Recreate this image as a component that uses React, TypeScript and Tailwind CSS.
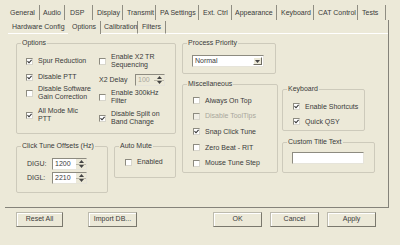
import React from 'react';

const topTabs = [
    { label: 'General', cls: 'w-[32px] pl-[2px]' },
    { label: 'Audio', cls: 'w-[25px] pl-[3px]' },
    { label: 'DSP', cls: 'w-[28px] pl-[5px]' },
    { label: 'Display', cls: 'w-[30px] pl-[4px]' },
    { label: 'Transmit', cls: 'w-[33px] pl-[4px]' },
    { label: 'PA Settings', cls: 'w-[43px] pl-[4px]' },
    { label: 'Ext. Ctrl', cls: 'w-[33px] pl-[4px]' },
    { label: 'Appearance', cls: 'w-[45px] pl-[3px]' },
    { label: 'Keyboard', cls: 'w-[37px] pl-[4px]' },
    { label: 'CAT Control', cls: 'w-[44px] pl-[4px]' },
    { label: 'Tests', cls: 'w-[28px] pl-[4px]' },
];

const Check = ({ checked = false, disabled = false }: { checked?: boolean; disabled?: boolean }) => (
    <span
        className={`w-[7px] h-[7px] shrink-0 border border-[#8d8b80] border-r-[#d8d6cc] border-b-[#d8d6cc] flex items-center justify-center ${
            disabled ? 'bg-[#f1efe6]' : 'bg-white'
        }`}
    >
        {checked && (
            <svg width="5" height="5" viewBox="0 0 5 5">
                <path d="M0.5 2.2 L2 3.8 L4.6 0.8" stroke="#333" strokeWidth="1.1" fill="none" />
            </svg>
        )}
    </span>
);

const CheckRow = ({
    lines,
    checked,
    disabled,
    className = '',
}: {
    lines: string[];
    checked?: boolean;
    disabled?: boolean;
    className?: string;
}) => (
    <div className={`flex items-center gap-[5px] ${className}`}>
        <Check checked={checked} disabled={disabled} />
        <span className={`leading-[8px] whitespace-nowrap ${disabled ? 'text-[#a9a79c]' : ''}`}>
            {lines.map((l) => (
                <span key={l} className="block">
                    {l}
                </span>
            ))}
        </span>
    </div>
);

const Group = ({ title, className, children }: { title: string; className: string; children?: React.ReactNode }) => (
    <fieldset className={`border border-[#cdcabb] rounded-[2px] ${className}`}>
        <legend className="ml-[4px] px-[1px] leading-[8px]">{title}</legend>
        {children}
    </fieldset>
);

const Tri = ({ up = false }: { up?: boolean }) => (
    <svg width="5" height="3" viewBox="0 0 5 3">
        <path d={up ? 'M0 3 L2.5 0 L5 3 Z' : 'M0 0 L5 0 L2.5 3 Z'} fill="#444" />
    </svg>
);

const Spin = ({ value, disabled = false, className }: { value: string; disabled?: boolean; className: string }) => (
    <div
        className={`flex h-[12px] border border-[#8d8b80] border-r-[#e6e4da] border-b-[#e6e4da] ${
            disabled ? 'bg-[#ece9d8] text-[#a9a79c]' : 'bg-white'
        } ${className}`}
    >
        <span className="flex-1 pl-[2px] leading-[10px]">{value}</span>
        <div className="w-[10px] flex flex-col bg-[#ece9d8]">
            <div className="flex-1 flex items-center justify-center border-b border-[#b9b6a7]">
                <Tri up />
            </div>
            <div className="flex-1 flex items-center justify-center">
                <Tri />
            </div>
        </div>
    </div>
);

const Btn = ({ label, className }: { label: string; className: string }) => (
    <div
        className={`h-[15px] flex items-center justify-center border border-[#bdbbae] border-r-[#7a786d] border-b-[#7a786d] shadow-[inset_1px_1px_0_#fff] ${className}`}
    >
        {label}
    </div>
);

export default function App() {
    return (
        <div className="w-[400px] h-[245px] overflow-hidden bg-[#ece9d8] text-[#3a3a3a] text-[7px] font-['Liberation_Sans',Arial,sans-serif]">
            {/* top tab strip */}
            <div className="flex pl-[8px] pt-[5px] h-[20px]">
                {topTabs.map((t) => (
                    <div key={t.label} className={`h-[15px] leading-[16px] border-r border-[#8f8d82] whitespace-nowrap ${t.cls}`}>
                        {t.label}
                    </div>
                ))}
            </div>

            {/* tab page */}
            <div className="ml-[5px] w-[384px] h-[188px] border-r border-b border-[#85837a] flex flex-col">
                <div className="flex pl-[3px] pt-[1px] h-[14px] items-stretch">
                    <div className="w-[60px] pl-[4px] leading-[12px] border-b border-white">Hardware Config</div>
                    <div className="w-[33px] pl-[4px] leading-[11px] border-r border-[#8f8d82]">Options</div>
                    <div className="w-[37px] pl-[3px] leading-[12px] border-r border-[#8f8d82] border-b border-b-white">Calibration</div>
                    <div className="w-[28px] pl-[4px] leading-[12px] border-r border-[#8f8d82] border-b border-b-white">Filters</div>
                    <div className="flex-1 border-b border-white" />
                </div>

                <div className="flex pl-[11px] pt-[5px]">
                    {/* left column */}
                    <div className="w-[160px] flex flex-col">
                        <Group title="Options" className="w-[160px] h-[95px]">
                            <div className="flex pl-[9px] pt-[6px]">
                                <div className="w-[73px] flex flex-col">
                                    <CheckRow className="h-[16px]" checked lines={['Spur Reduction']} />
                                    <CheckRow className="h-[16px]" checked lines={['Disable PTT']} />
                                    <CheckRow className="h-[16px]" lines={['Disable Software', 'Gain Correction']} />
                                    <CheckRow className="h-[16px] mt-[6px]" checked lines={['All Mode Mic', 'PTT']} />
                                </div>
                                <div className="flex flex-col">
                                    <CheckRow className="h-[16px]" lines={['Enable X2 TR', 'Sequencing']} />
                                    <div className="h-[16px] mt-[3px] flex items-center">
                                        <span className="w-[36px]">X2 Delay</span>
                                        <Spin value="100" disabled className="w-[30px]" />
                                    </div>
                                    <CheckRow className="h-[16px] mt-[1px]" lines={['Enable 300kHz', 'Filter']} />
                                    <CheckRow className="h-[16px] mt-[5px]" checked lines={['Disable Split on', 'Band Change']} />
                                </div>
                            </div>
                        </Group>

                        <div className="flex mt-[8px] items-start">
                            <Group title="Click Tune Offsets (Hz)" className="w-[92px] h-[51px]">
                                <div className="flex flex-col gap-[2px] pl-[10px] pt-[8px]">
                                    <div className="flex items-center h-[12px]">
                                        <span className="w-[25px]">DIGU:</span>
                                        <Spin value="1200" className="w-[35px]" />
                                    </div>
                                    <div className="flex items-center h-[12px]">
                                        <span className="w-[25px]">DIGL:</span>
                                        <Spin value="2210" className="w-[35px]" />
                                    </div>
                                </div>
                            </Group>
                            <Group title="Auto Mute" className="ml-[6px] w-[62px] h-[36px]">
                                <div className="pl-[10px] pt-[4px]">
                                    <CheckRow className="h-[16px]" lines={['Enabled']} />
                                </div>
                            </Group>
                        </div>
                    </div>

                    {/* middle column */}
                    <div className="ml-[6px] flex flex-col">
                        <Group title="Process Priority" className="w-[94px] h-[35px]">
                            <div className="pl-[9px] pt-[8px]">
                                <div className="w-[72px] h-[12px] flex bg-white border border-[#8d8b80] border-r-[#e6e4da] border-b-[#e6e4da]">
                                    <span className="flex-1 pl-[2px] leading-[10px]">Normal</span>
                                    <div className="w-[9px] m-[1px] flex items-center justify-center bg-[#ece9d8] border border-[#fff] border-r-[#6f6d62] border-b-[#6f6d62]">
                                        <Tri />
                                    </div>
                                </div>
                            </div>
                        </Group>
                        <Group title="Miscellaneous" className="mt-[6px] w-[96px] h-[93px]">
                            <div className="pl-[10px] pt-[5px] flex flex-col">
                                <CheckRow className="h-[15.6px]" lines={['Always On Top']} />
                                <CheckRow className="h-[15.6px]" disabled lines={['Disable ToolTips']} />
                                <CheckRow className="h-[15.6px]" checked lines={['Snap Click Tune']} />
                                <CheckRow className="h-[15.6px]" lines={['Zero Beat -  RIT']} />
                                <CheckRow className="h-[15.6px]" lines={['Mouse Tune Step']} />
                            </div>
                        </Group>
                    </div>

                    {/* right column */}
                    <div className="ml-[4px] mt-[46px] flex flex-col">
                        <Group title="Keyboard" className="w-[83px] h-[46px]">
                            <div className="pl-[10px] pt-[6px] flex flex-col">
                                <CheckRow className="h-[15px]" checked lines={['Enable Shortcuts']} />
                                <CheckRow className="h-[15px]" checked lines={['Quick QSY']} />
                            </div>
                        </Group>
                        <Group title="Custom Title Text" className="mt-[7px] w-[93px] h-[35px]">
                            <div className="pl-[9px] pt-[6px]">
                                <div className="w-[72px] h-[12px] bg-white border border-[#8d8b80] border-r-[#e6e4da] border-b-[#e6e4da]" />
                            </div>
                        </Group>
                    </div>
                </div>
            </div>

            {/* dialog buttons */}
            <div className="flex mt-[4px] pl-[16px]">
                <Btn label="Reset All" className="w-[47px]" />
                <Btn label="Import DB..." className="ml-[25px] w-[49px]" />
                <Btn label="OK" className="ml-[76px] w-[49px]" />
                <Btn label="Cancel" className="ml-[8px] w-[49px]" />
                <Btn label="Apply" className="ml-[8px] w-[49px]" />
            </div>
        </div>
    );
}
